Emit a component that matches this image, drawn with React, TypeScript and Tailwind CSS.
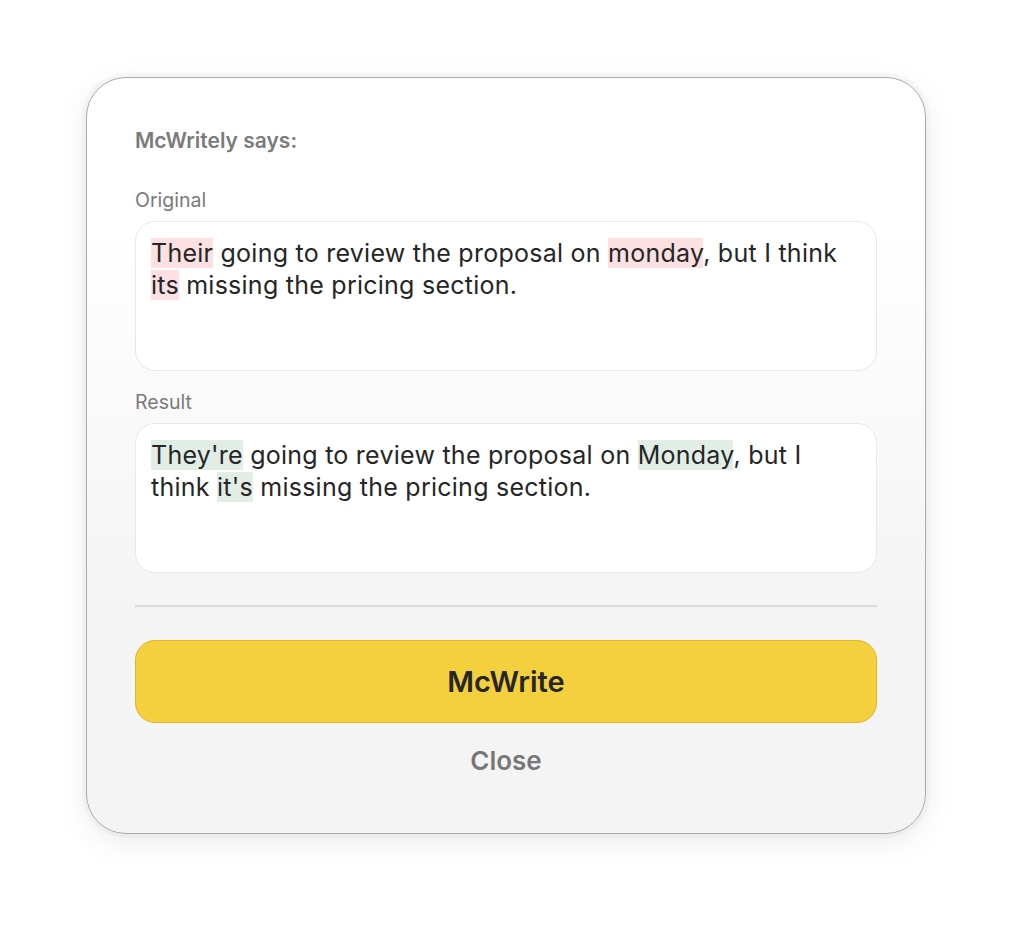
export default function App() {
  return (
    <div className="min-h-[928px] w-[1012px] bg-white pt-[77px] pl-[86px]" style={{ fontFamily: "Inter, 'Noto Sans', sans-serif" }}>
      <div className="flex h-[757px] w-[840px] flex-col rounded-[40px] border border-[#a9a9a9] bg-gradient-to-b from-white from-20% to-[#f4f4f4] to-70% px-[48px] pt-[50px] shadow-[0_0_0_4px_rgba(0,0,0,0.025),0_8px_30px_rgba(0,0,0,0.08)]">
        <p className="text-[21px] font-semibold leading-[26px] text-[#7b7b7b]">McWritely says:</p>

        <p className="mt-[34px] text-[19.5px] leading-[24px] text-[#7a7a7a]">Original</p>
        <TextBox>
          <Mark tone="red">Their</Mark> going to review the proposal on <Mark tone="red">monday</Mark>, but I think{" "}
          <Mark tone="red">its</Mark> missing the pricing section.
        </TextBox>

        <p className="mt-[19px] text-[19.5px] leading-[24px] text-[#7a7a7a]">Result</p>
        <TextBox>
          <Mark tone="green">They're</Mark> going to review the proposal on <Mark tone="green">Monday</Mark>, but I think{" "}
          <Mark tone="green">it's</Mark> missing the pricing section.
        </TextBox>

        <div className="mt-[32px] h-[2px] bg-[#d9d9d9]" />

        <button className="mt-[33px] flex h-[83px] items-center justify-center rounded-[20px] border-[1.5px] border-[#e0b622] bg-[#f4cf3e] text-[29px] font-semibold text-[#262626]">
          McWrite
        </button>

        <button className="mt-[23px] text-[26px] font-semibold leading-[30px] text-[#777777]">Close</button>
      </div>
    </div>
  );
}

function TextBox({ children }: { children: React.ReactNode }) {
  return (
    <div className="mt-[9px] h-[150px] rounded-[20px] border border-[#e2ebe8] bg-white px-[15px] pt-[15px] text-[25px] leading-[32px] tracking-[0.25px] text-[#262626]">
      {children}
    </div>
  );
}

function Mark({ tone, children }: { tone: "red" | "green"; children: React.ReactNode }) {
  return <span className={tone === "red" ? "bg-[#fde0e1]" : "bg-[#e2eee5]"}>{children}</span>;
}
